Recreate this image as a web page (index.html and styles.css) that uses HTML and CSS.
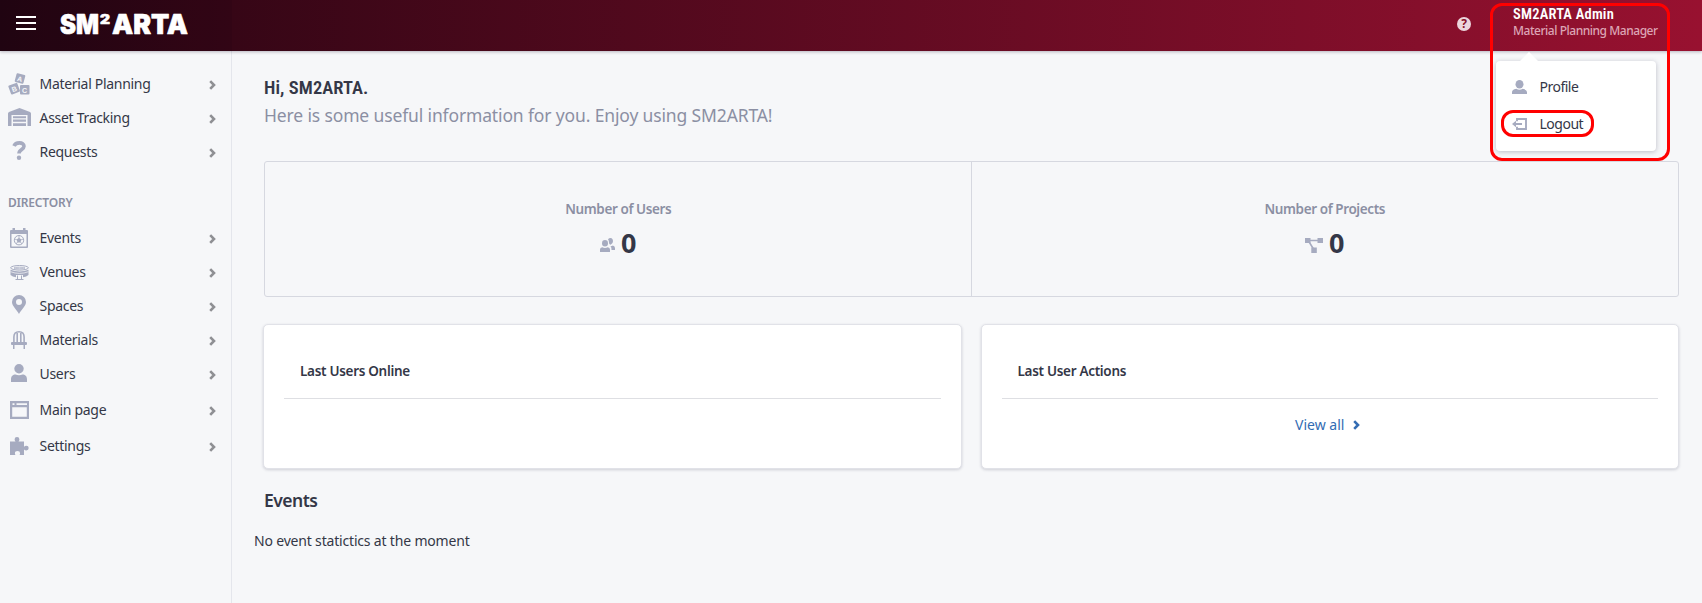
FILE: index.html
```
<!DOCTYPE html>
<html lang="en">
<head>
<meta charset="utf-8">
<title>SM2ARTA</title>
<link rel="stylesheet" href="styles.css">
</head>
<body>
<svg width="0" height="0" class="defs">
  <symbol id="chev" viewBox="0 0 7 10"><path d="M1.200 1.200 5 5 1.200 8.800" fill="none" stroke="currentColor" stroke-width="2.600"/></symbol>
  <symbol id="user" viewBox="0 0 16 18"><circle cx="8" cy="4.700" r="4.700"/><path d="M0 18v-2.500C0 12 2 10.600 4.500 10.600c2 1 5 1 7 0C14 10.600 16 12 16 15.500V18z"/></symbol>
</svg>
<header class="topbar">
  <div class="brand">
    <span class="burger"><i></i><i></i><i></i></span>
    <svg class="logo" width="134" height="40" viewBox="0 0 134 40">
      <text x="1" y="28.500" font-size="26.500" textLength="39" lengthAdjust="spacingAndGlyphs">SM</text>
      <text x="41" y="18.500" font-size="13" textLength="10" lengthAdjust="spacingAndGlyphs">2</text>
      <text x="53" y="28.500" font-size="26.500" textLength="76" lengthAdjust="spacingAndGlyphs">ARTA</text>
    </svg>
  </div>
  <div class="account">
    <span class="help">?</span>
    <div class="who"><b>SM2ARTA Admin</b><small>Material Planning Manager</small></div>
  </div>
</header>
<div class="shell">
  <nav class="side">
    <a class="row"><span class="ico"><svg width="22" height="22" viewBox="0 0 22 22"><g><rect x="7.500" y="1" width="9" height="9" rx="1" transform="rotate(15 12 5.500)"/><rect x="1.500" y="11" width="9.500" height="9.500" rx="1" transform="rotate(-20 6 16)"/><rect x="12" y="12" width="9.500" height="9.500" rx="1"/></g><g class="abc"><text x="9.400" y="8.600" transform="rotate(15 12 6)">A</text><text x="3.800" y="18.600" transform="rotate(-20 6 16)">B</text><text x="14" y="19.500">C</text></g></svg></span><span>Material Planning</span><svg class="chev"><use href="#chev"/></svg></a>
    <a class="row"><span class="ico up"><svg width="23" height="18" viewBox="0 0 23 18"><path d="M0 18V5.500Q0 4.500 1 4L11.500 0 22 4q1 .5 1 1.500V18h-3.500V7h-16v11z"/><path d="M5 8.300h13v1.900H5zM5 11.600h13v2.200H5zM5 15.200h13V18H5z"/></svg></span><span>Asset Tracking</span><svg class="chev"><use href="#chev"/></svg></a>
    <a class="row"><span class="ico up"><svg width="14" height="19" viewBox="0 0 14 19"><path d="M2 5C3.500 1 12 .5 12 5.300 12 8.500 7 8.500 7 12.500" fill="none" stroke="currentColor" stroke-width="3.600"/><circle cx="7" cy="16.700" r="2.200"/></svg></span><span>Requests</span><svg class="chev"><use href="#chev"/></svg></a>
    <h6 class="group">DIRECTORY</h6>
    <a class="row"><span class="ico"><svg width="18" height="20" viewBox="0 0 18 20"><path d="M2.500 0h2.500v2h8V0h2.500v2H17q1 0 1 1v16q0 1-1 1H1q-1 0-1-1V3q0-1 1-1h1.500zM1.500 6v12.500h15V6z" fill-rule="evenodd"/><circle cx="9" cy="12.200" r="4.700" fill="none" stroke="currentColor" stroke-width="1"/><path d="m9 9.800 2.400 1.800-.9 2.800h-3l-.9-2.800z"/><path d="M9 7.500V10M4.500 11l2.300.7M13.500 11l-2.300.7M6 16l1.600-2M12 16l-1.600-2" stroke="currentColor" stroke-width=".8"/></svg></span><span>Events</span><svg class="chev"><use href="#chev"/></svg></a>
    <a class="row"><span class="ico"><svg width="19" height="15" viewBox="0 0 19 15"><g fill="none" stroke="currentColor"><ellipse cx="9.500" cy="2.800" rx="8.900" ry="2.300"/><ellipse cx="9.500" cy="3" rx="5.500" ry=".8" stroke-width=".8"/></g><path d="M.5 4.800q9 3.400 18 0V10q-2 2-5.500 2.300V10H6v2.300Q2.500 12 .5 10z"/><path d="M.5 6.700q9 3.400 18 0" fill="none" stroke="#f6f7f9" stroke-width=".7"/><path d="M7.500 10.500v4h4v-4M5.500 14.500h8" fill="none" stroke="currentColor"/></svg></span><span>Venues</span><svg class="chev"><use href="#chev"/></svg></a>
    <a class="row"><span class="ico up"><svg width="14" height="19" viewBox="0 0 14 19"><path d="M7 0a7 7 0 0 1 7 7c0 4-4.500 7.500-7 12C4.500 14.500 0 11 0 7a7 7 0 0 1 7-7zm0 4a3 3 0 1 0 0 6 3 3 0 0 0 0-6z"/></svg></span><span>Spaces</span><svg class="chev"><use href="#chev"/></svg></a>
    <a class="row"><span class="ico"><svg width="16" height="18" viewBox="0 0 16 18"><path d="M2.900 11V6q0-5.200 5.100-5.200T13.100 6v5M6.200 11V2M9.800 11V2" fill="none" stroke="currentColor" stroke-width="1.600"/><rect y="11" width="16" height="3" rx="1"/><path d="M2 13h1.500v5H2zM12.500 13H14v5h-1.500z"/></svg></span><span>Materials</span><svg class="chev"><use href="#chev"/></svg></a>
    <a class="row"><span class="ico up"><svg width="16" height="18"><use href="#user"/></svg></span><span>Users</span><svg class="chev"><use href="#chev"/></svg></a>
    <a class="row tall"><span class="ico"><svg width="19" height="18" viewBox="0 0 19 18"><path d="M0 0h19v18H0zM2.200 6.200v9.600h14.600V6.200zM2.500 2.200v1.800h2V2.200zM6.500 2.200v1.800H17V2.200z" fill-rule="evenodd"/></svg></span><span>Main page</span><svg class="chev"><use href="#chev"/></svg></a>
    <a class="row tall"><span class="ico"><svg width="19" height="18" viewBox="0 0 19 18"><path d="M0 4.500h5.500Q4.600 3.500 4.600 2.300a2.400 2.300 0 0 1 4.800 0Q9.400 3.500 8.500 4.500H14v5.200q1-1 2.300-1a2.400 2.400 0 0 1 0 4.800q-1.300 0-2.300-1V18H9.500q.6-.7.600-1.700a2.600 2.300 0 0 0-5.200 0q0 1 .6 1.700H0z"/></svg></span><span>Settings</span><svg class="chev"><use href="#chev"/></svg></a>
  </nav>
  <main class="content">
    <h1 class="hi">Hi, SM2ARTA.</h1>
    <p class="intro">Here is some useful information for you. Enjoy using SM2ARTA!</p>
    <section class="stats">
      <div class="stat"><span class="label">Number of Users</span><div class="value"><svg width="15" height="14" viewBox="0 0 15 14"><ellipse cx="5" cy="5.300" rx="3" ry="3.300"/><path d="M0 14v-2.600q0-2 2.200-2.200 2.800 1.400 5.600 0Q10 9.400 10 11.400V14z"/><path d="M8 1.200Q9 0 10.500 0 13 .2 13 3.300 13 6 10.600 6.800 8.800 6.200 9 4.500 9 2.500 8 1.200zM10.500 8.200q1.600 0 2.400-.8Q15 8 15 10v2h-3.500q.2-2.500-1-3.800z"/></svg><b>0</b></div></div>
      <div class="stat"><span class="label">Number of Projects</span><div class="value"><svg width="18" height="15" viewBox="0 0 18 15"><path d="M0 0h5.500v5H0zM12.500 0H18v5h-5.500zM6.300 9.500h5.500V15H6.300z"/><path d="M3 2.500h12M3.500 3 8.500 11" stroke="currentColor" stroke-width="1.600"/></svg><b>0</b></div></div>
    </section>
    <section class="cards">
      <article class="card"><h2>Last Users Online</h2></article>
      <article class="card"><h2>Last User Actions</h2><a class="all"><span>View all</span><svg width="7" height="10"><use href="#chev"/></svg></a></article>
    </section>
    <h3 class="events">Events</h3>
    <p class="none">No event statictics at the moment</p>
  </main>
</div>
<div class="menu">
  <a><svg width="15" height="14" viewBox="0 0 15 14"><ellipse cx="7.500" cy="4.300" rx="4" ry="4.300"/><path d="M0 14v-2q0-2.200 4.300-3.200 3.200 1.700 6.400 0Q15 9.800 15 12v2z"/></svg><span>Profile</span></a>
  <a><svg width="15" height="12" viewBox="0 0 15 12"><path d="M5 3.200V1h9v10H5V8.800M2 6h8" fill="none" stroke="currentColor" stroke-width="1.900"/><path d="M0 6l4-3.200v6.400z"/></svg><span>Logout</span></a>
</div>
<div class="mark outer"></div>
<div class="mark inner"></div>
</body>
</html>
```
FILE: styles.css
```
* { box-sizing: border-box; }
body { margin: 0; height: 603px; overflow: hidden; background: #f6f7f9; color: #343747; font: 14px/20px "Noto Sans", sans-serif; }
h1, h2, h3, h6, p { margin: 0; }
svg { fill: currentColor; display: block; }
.defs { position: absolute; }

.topbar { position: relative; height: 51px; display: flex; justify-content: space-between; background: linear-gradient(90deg, #220512 0, #360616 232px, #981130 100%); box-shadow: 0 1px 3px rgba(40, 30, 60, .3); }
.brand { width: 232px; padding: 5px 0 0 16px; display: flex; gap: 23px; background: rgba(10, 0, 8, .08); }
.burger { width: 20px; padding-top: 11px; display: flex; flex-direction: column; gap: 4px; }
.burger i { height: 2px; background: #fff; }
.logo { color: #fff; flex: none; font-family: Inter, sans-serif; font-weight: 900; stroke: #fff; stroke-width: .6; stroke-linejoin: round; }
.account { display: flex; padding-right: 44px; }
.help { width: 14px; height: 14px; margin: 17px 42px 0 0; border-radius: 50%; background: #ecd5dc; color: #871029; font: 700 12px/14px "Noto Sans", sans-serif; text-align: center; }
.who { width: 145px; padding-top: 6px; white-space: nowrap; }
.who b { display: block; color: #fff; font: 600 14.5px/17px Roboto, sans-serif; font-stretch: 85%; letter-spacing: .2px; }
.who small { display: block; color: #dca5b5; font: 500 12px/15px "Noto Sans", sans-serif; letter-spacing: -.47px; }

.shell { display: flex; height: 552px; }
.side { width: 232px; flex: none; border-right: 1px solid #e4e6ec; padding-top: 16px; }
.row { height: 34px; display: grid; grid-template-columns: 22px 1fr 7px; column-gap: 9.5px; padding: 0 15px 0 8px; align-items: center; letter-spacing: -.3px; }
.row.tall { height: 36px; padding-top: 1px; }
.ico { color: #a6abc0; display: flex; justify-content: center; width: 22px; }
.ico.up { padding-bottom: 3px; }
.ico svg { flex: none; }
.abc { fill: #f6f7f9; font: 700 7px "Liberation Sans", sans-serif; letter-spacing: 0; }
.chev { width: 7px; height: 10px; color: #8f9094; margin-top: 2px; }
.group { height: 52px; padding: 22px 0 0 8px; font: 600 12px/23px "Noto Sans", sans-serif; color: #8b8fa3; letter-spacing: -.2px; }

.content { flex: 1; padding: 23px 23px 0 32px; }
.hi { font: 600 18.5px/28px Roboto, sans-serif; font-stretch: 85%; letter-spacing: .08px; }
.intro { font-size: 17.5px; line-height: 26px; color: #8b8fa3; letter-spacing: -.14px; }
.stats { margin-top: 33px; height: 136px; display: grid; grid-template-columns: 1fr 1fr; border: 1px solid #d6d8e0; border-radius: 3px; }
.stat { padding-top: 37px; text-align: center; }
.stat + .stat { border-left: 1px solid #d6d8e0; margin-left: -1px; }
.label { display: block; font-weight: 600; font-size: 13.5px; color: #8b8fa3; letter-spacing: -.4px; }
.value { display: flex; justify-content: center; align-items: center; gap: 6px; margin-top: 5px; height: 37px; color: #a6abc0; }
.value svg { margin-top: 5px; }
.value b { color: #343747; font: 700 27px/37px "Noto Sans", sans-serif; }
.cards { margin: 27px 0 0 -1px; display: grid; grid-template-columns: 1fr 1fr; gap: 19px; }
.card { height: 145px; background: #fff; border: 1px solid #e1e2e8; border-radius: 5px; box-shadow: 0 1px 3px rgba(50, 50, 80, .2); padding: 0 20px; }
.card h2 { height: 74px; padding: 36px 16px 0; border-bottom: 1px solid #dedfe3; font-size: 13.5px; line-height: 20px; font-weight: 600; letter-spacing: -.3px; }
.all { display: flex; justify-content: center; align-items: center; gap: 9px; padding: 16px 4px 0 0; color: #336cb3; }
.events { margin-top: 19px; font-size: 17.5px; line-height: 24px; font-weight: 600; letter-spacing: -.5px; }
.none { margin: 19px 0 0 -10px; letter-spacing: -.18px; }

.menu { position: absolute; left: 1496px; top: 61px; width: 160px; height: 90px; padding: 7px 16px; background: #fff; border-radius: 4px; box-shadow: 0 1px 5px rgba(50, 50, 80, .3); }
.menu::before { content: ""; position: absolute; left: 24px; top: -9px; border: 9px solid transparent; border-top: 0; border-bottom-color: #fff; }
.menu a { height: 37px; display: flex; align-items: center; gap: 12.5px; letter-spacing: -.5px; }
.menu svg { color: #a6abc0; }
.mark { position: absolute; border: 3px solid #f00; }
.outer { left: 1490px; top: 3px; width: 180px; height: 158px; border-radius: 12px; }
.inner { left: 1501px; top: 110px; width: 93px; height: 27px; border-radius: 12px; }
```
